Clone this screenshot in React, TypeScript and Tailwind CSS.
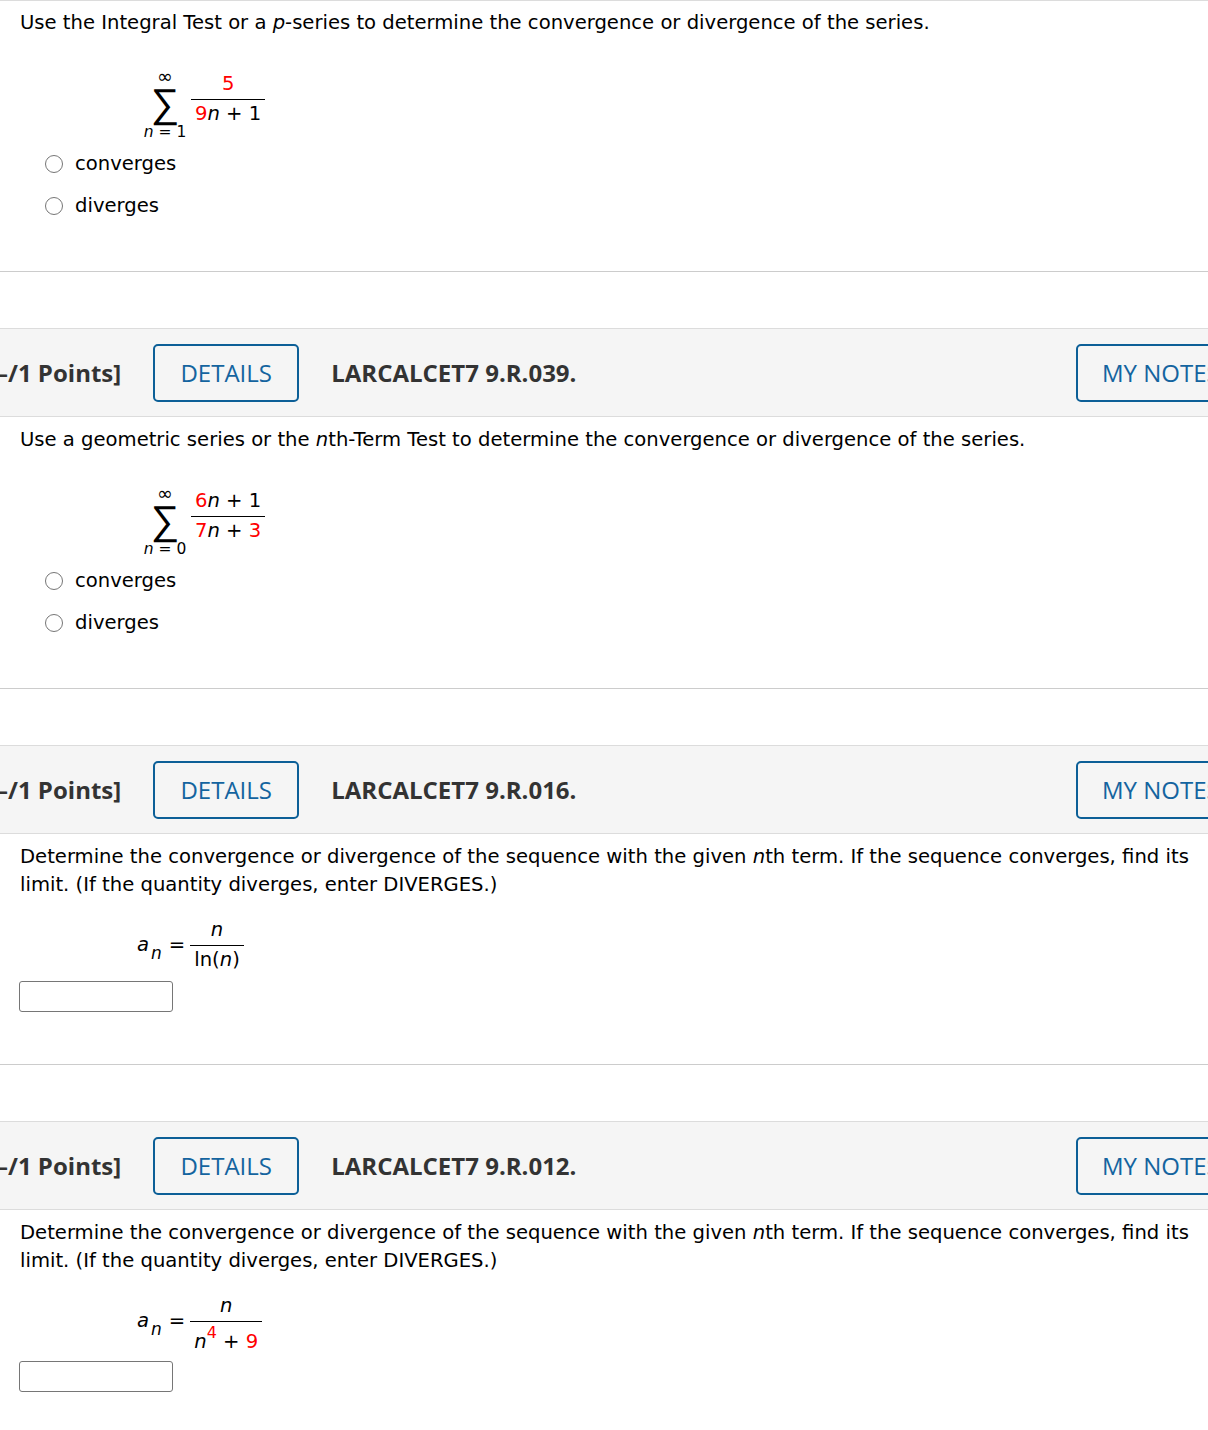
import React from "react";

const body = "font-['DejaVu_Sans','Verdana',sans-serif]";

function Header({ code }: { code: string }) {
  return (
    <div className="flex items-center h-[89px] border-y border-[#dcdcdc] bg-[#f5f5f5] font-['Open_Sans',sans-serif] text-[24px] whitespace-nowrap">
      <span className="font-bold text-[#333] -ml-[4px]">–/1 Points]</span>
      <button className="ml-[32px] w-[146px] h-[58px] shrink-0 border-2 border-[#0c5f97] rounded-[5px] text-[#14649f]">
        DETAILS
      </button>
      <span className="ml-[32px] font-bold text-[#333]">LARCALCET7 {code}</span>
      <button className="ml-auto -mr-[38px] w-[170px] h-[58px] pl-[24px] text-left shrink-0 border-2 border-[#0c5f97] rounded-[5px] text-[#14649f]">
        MY NOTES
      </button>
    </div>
  );
}

function Radio({ label }: { label: string }) {
  return (
    <div className="flex items-center h-[28px] ml-[25px]">
      <span className="w-[18px] h-[18px] rounded-full border-[1.5px] border-[#767676] bg-white" />
      <span className="ml-[12px]">{label}</span>
    </div>
  );
}

function Fraction({
  num,
  den,
  denPad = "pt-[2px]",
  className = "",
}: {
  num: React.ReactNode;
  den: React.ReactNode;
  denPad?: string;
  className?: string;
}) {
  return (
    <div className={`flex flex-col items-stretch text-center ${className}`}>
      <span className="leading-[24px] pb-[3px] px-[4px]">{num}</span>
      <span className="h-px bg-black" />
      <span className={`leading-[24px] px-[4px] ${denPad}`}>{den}</span>
    </div>
  );
}

function Sum({ from, num, den }: { from: string; num: React.ReactNode; den: React.ReactNode }) {
  return (
    <div className="flex items-start ml-[121px] mt-[32px]">
      <div className="flex flex-col items-center w-[48px]">
        <span className="text-[19px] leading-[14px]">∞</span>
        <span className="text-[40px] leading-[40px] font-light">∑</span>
        <span className="text-[15.5px] leading-[16px] mt-[1px] whitespace-nowrap">
          <i>n</i> = {from}
        </span>
      </div>
      <Fraction num={num} den={den} className="ml-[2px] mt-[3px]" />
    </div>
  );
}

function SeqTerm({ den, denPad }: { den: React.ReactNode; denPad?: string }) {
  return (
    <div className="flex items-start ml-[117px] mt-[19px]">
      <span className="italic mt-[13px]">
        a<sub className="text-[17px] ml-[2px] align-[-4px]">n</sub>
      </span>
      <span className="ml-[7px] mt-[13px]">=</span>
      <Fraction num={<i>n</i>} den={den} denPad={denPad} className="ml-[5px]" />
    </div>
  );
}

const red = "text-[#ff0000]";

export default function App() {
  return (
    <div className={`${body} text-[19.6px] leading-[28px] text-black bg-white min-h-screen overflow-hidden`}>
      {/* integral test / p-series */}
      <div className="border-t border-[#dcdcdc] pt-[8px] pb-[51px] px-[20px] border-b border-b-[#cccccc]">
        <p className="-mr-[10px]">
          Use the Integral Test or a <i>p</i>-series to determine the convergence or divergence of the series.
        </p>
        <Sum
          from="1"
          num={<span className={red}>5</span>}
          den={
            <>
              <span className={red}>9</span>
              <i>n</i> + 1
            </>
          }
        />
        <div className="flex flex-col gap-[14px] mt-[10px]">
          <Radio label="converges" />
          <Radio label="diverges" />
        </div>
      </div>

      <div className="mt-[56px]">
        <Header code="9.R.039." />
        <div className="pt-[9px] pb-[51px] px-[20px] border-b border-[#cccccc]">
          <p className="-mr-[10px]">
            Use a geometric series or the <i>n</i>th-Term Test to determine the convergence or divergence of the series.
          </p>
          <Sum
            from="0"
            num={
              <>
                <span className={red}>6</span>
                <i>n</i> + 1
              </>
            }
            den={
              <>
                <span className={red}>7</span>
                <i>n</i> + <span className={red}>3</span>
              </>
            }
          />
          <div className="flex flex-col gap-[14px] mt-[10px]">
            <Radio label="converges" />
            <Radio label="diverges" />
          </div>
        </div>
      </div>

      <div className="mt-[56px]">
        <Header code="9.R.016." />
        <div className="pt-[9px] pb-[52px] px-[20px] border-b border-[#cccccc]">
          <p className="-mr-[10px]">
            Determine the convergence or divergence of the sequence with the given <i>n</i>th term. If the sequence converges, find its limit. (If the quantity diverges, enter DIVERGES.)
          </p>
          <SeqTerm den={<>ln(<i>n</i>)</>} />
          <div className="mt-[9px] -ml-px w-[154px] h-[31px] border border-[#767676] rounded-[3px]" />
        </div>
      </div>

      <div className="mt-[56px]">
        <Header code="9.R.012." />
        <div className="pt-[9px] pb-[36px] px-[20px]">
          <p className="-mr-[10px]">
            Determine the convergence or divergence of the sequence with the given <i>n</i>th term. If the sequence converges, find its limit. (If the quantity diverges, enter DIVERGES.)
          </p>
          <SeqTerm
            denPad="pt-[8px]"
            den={
              <>
                <i>n</i>
                <sup className={`${red} text-[16px] align-[2px]`}>4</sup> + <span className={red}>9</span>
              </>
            }
          />
          <div className="mt-[7px] -ml-px w-[154px] h-[31px] border border-[#767676] rounded-[3px]" />
        </div>
      </div>
    </div>
  );
}
